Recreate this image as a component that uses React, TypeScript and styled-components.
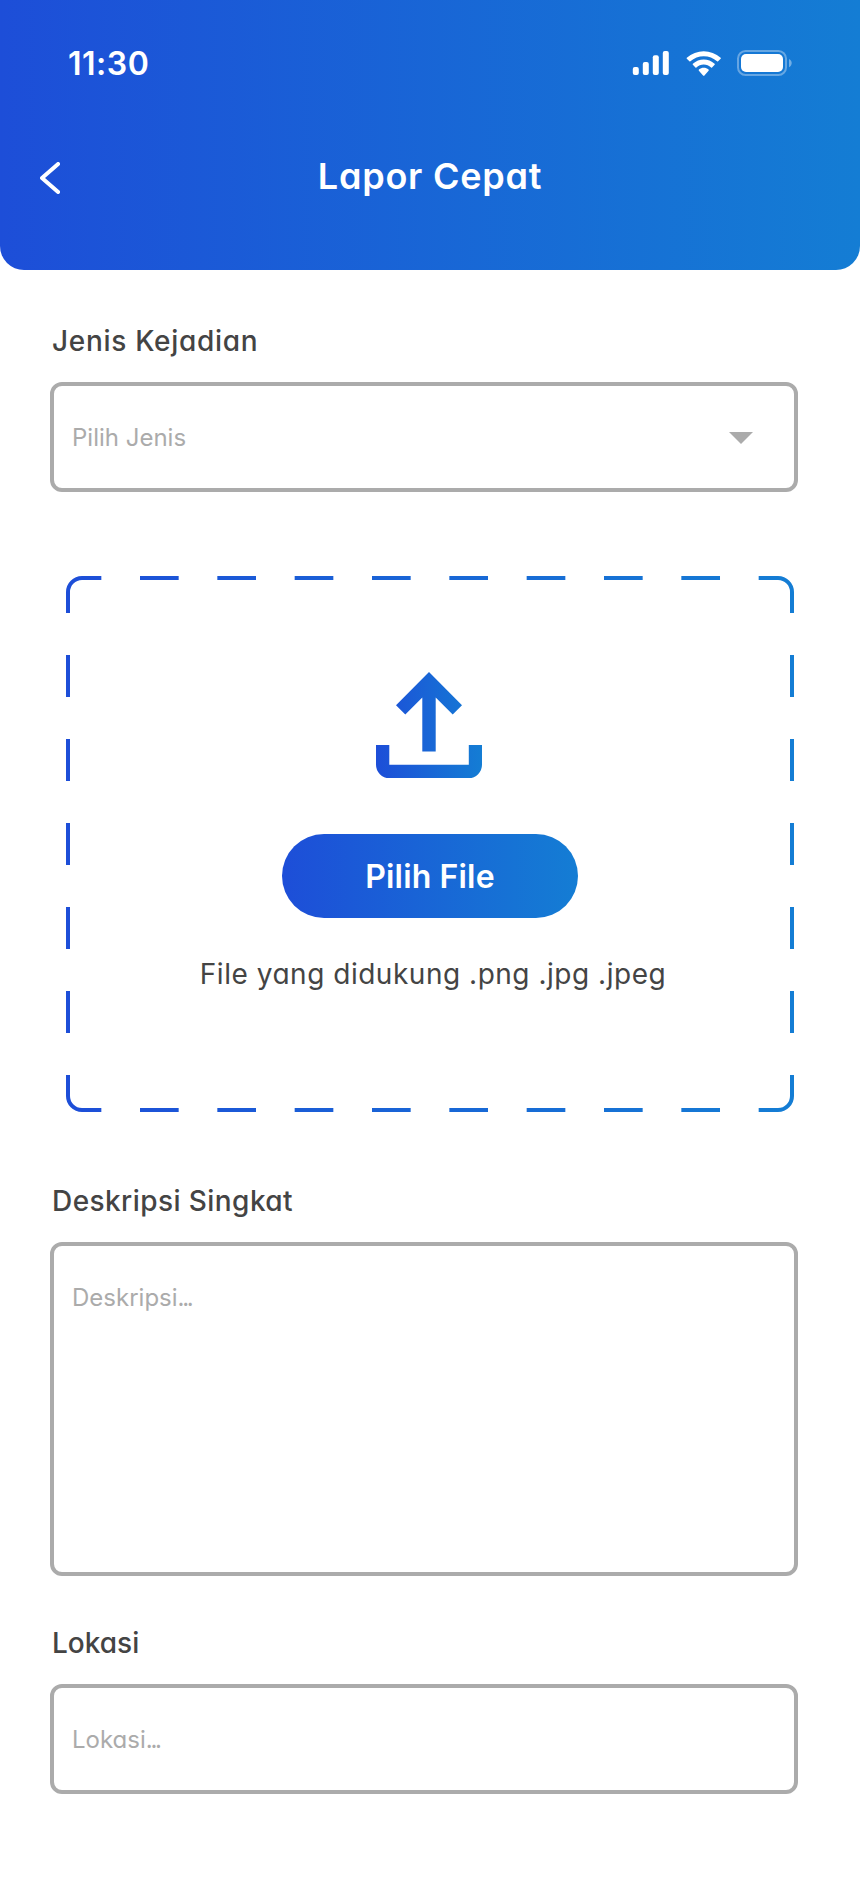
import React from "react";
import styled, { createGlobalStyle } from "styled-components";

const BLUE = "#1d4ed8";
const SKY = "#147dd4";
const GRAY = "#ababab";
const INK = "#444444";

const GlobalStyle = createGlobalStyle`
  *, *::before, *::after { box-sizing: border-box; }
  body {
    margin: 0;
    background: #fff;
    font-family: Inter, sans-serif;
    font-feature-settings: "cv11";
  }
`;

const Screen = styled.main`
  width: 860px;
  height: 1878px;
  background: #fff;
  overflow: hidden;
`;

const Header = styled.header`
  height: 270px;
  border-radius: 0 0 24px 24px;
  background: linear-gradient(90deg, ${BLUE}, ${SKY});
  color: #fff;
`;

const StatusBar = styled.div`
  display: flex;
  align-items: flex-start;
  justify-content: space-between;
  height: 140px;
  padding: 44px 67px 0 68px;
`;

const Clock = styled.time`
  font-size: 32px;
  font-weight: 600;
  line-height: 40px;
  letter-spacing: 0.5px;
`;

const StatusIcons = styled.div`
  display: flex;
  align-items: flex-start;
  gap: 16px;
  padding-top: 6px;
`;

const TitleBar = styled.div`
  display: grid;
  grid-template-columns: 60px 1fr 60px;
  align-items: center;
  height: 72px;
  padding: 0 20px;
`;

const BackButton = styled.button`
  display: flex;
  width: 60px;
  height: 60px;
  padding: 16px 20px 0;
  border: 0;
  background: none;
  color: inherit;
`;

const Title = styled.h1`
  margin: 0;
  padding: 0 0 1px;
  font-size: 36px;
  font-weight: 600;
  line-height: 48px;
  letter-spacing: 0.75px;
  text-align: center;
`;

const Form = styled.form`
  display: flex;
  flex-direction: column;
  padding: 50px 62px 0 50px;
`;

const Field = styled.div<{ $gap: number }>`
  display: flex;
  flex-direction: column;
  gap: 21px;
  margin-bottom: ${(p) => p.$gap}px;
`;

const Label = styled.label<{ $track: number }>`
  padding: 1px 0 0 2px;
  color: ${INK};
  font-size: 28px;
  font-weight: 500;
  line-height: 40px;
  letter-spacing: ${(p) => p.$track}px;
`;

const Box = styled.div<{ $height: number }>`
  display: flex;
  align-items: flex-start;
  justify-content: space-between;
  height: ${(p) => p.$height}px;
  padding: 32px 41px 0 18px;
  border: 4px solid ${GRAY};
  border-radius: 12px;
`;

const Placeholder = styled.span`
  color: ${GRAY};
  font-size: 24px;
  font-weight: 400;
  line-height: 40px;
`;

const Dots = styled.span`
  letter-spacing: -2.3px;
`;

const Caret = styled.svg`
  margin-top: 14px;
`;

const DropZone = styled.section`
  display: grid;
  width: 728px;
  height: 536px;
  margin: 0 0 68px 16px;
`;

const DashedFrame = styled.svg`
  grid-area: 1 / 1;
`;

const DropContent = styled.div`
  grid-area: 1 / 1;
  display: flex;
  flex-direction: column;
  align-items: center;
  padding-top: 96px;
`;

const UploadIcon = styled.svg`
  margin-right: 2px;
`;

const PickButton = styled.button`
  width: 296px;
  height: 84px;
  margin-top: 56px;
  padding: 1px 0 0;
  border: 0;
  border-radius: 42px;
  background: linear-gradient(90deg, ${BLUE}, ${SKY});
  color: #fff;
  font-family: inherit;
  font-feature-settings: inherit;
  font-size: 32px;
  font-weight: 600;
  letter-spacing: 0.15px;
`;

const Hint = styled.p`
  margin: 36px 0 0 6px;
  color: ${INK};
  font-size: 28px;
  line-height: 40px;
  letter-spacing: 0.52px;
  white-space: nowrap;
`;

const Signal = () => (
  <svg width="38" height="26" viewBox="0 0 38 26" fill="#fff">
    <rect x="0.8" y="17" width="6" height="8" rx="2" />
    <rect x="10.8" y="12" width="6" height="13" rx="2" />
    <rect x="20.8" y="5.2" width="6" height="19.8" rx="2" />
    <rect x="30.8" y="1" width="6" height="24" rx="2" />
  </svg>
);

const Wifi = () => (
  <svg width="35" height="26" viewBox="-0.3 -0.6 17.5 13" fill="#fff">
    <path d="M8.5713 2.46628C11.0584 2.46639 13.4504 3.38847 15.2529 5.04195C15.3887 5.16963 15.6056 5.16802 15.7393 5.03834L17.0368 3.77487C17.1045 3.70911 17.1422 3.62004 17.1417 3.52735C17.1411 3.43467 17.1023 3.34603 17.0338 3.28104C12.3028 -1.09368 4.83907 -1.09368 0.108056 3.28104C0.0395 3.34598 0.0006 3.4346 0 3.52728C-0.0006 3.61996 0.037 3.70906 0.10469 3.77487L1.40255 5.03834C1.53615 5.16822 1.75327 5.16983 1.88893 5.04195C3.69167 3.38836 6.08395 2.46628 8.5713 2.46628ZM8.56795 6.68656C9.92527 6.68647 11.2341 7.19821 12.2403 8.12234C12.3763 8.2535 12.5907 8.25065 12.7234 8.11594L14.0106 6.79654C14.0784 6.72739 14.116 6.63352 14.115 6.53598C14.1141 6.43844 14.0747 6.34538 14.0056 6.27763C10.9416 3.38503 6.19688 3.38503 3.13305 6.27763C3.06384 6.34538 3.02435 6.43848 3.02345 6.53607C3.02254 6.63365 3.0603 6.72752 3.12822 6.79654L4.41513 8.11594C4.54778 8.25065 4.76215 8.2535 4.89823 8.12234C5.90368 7.19882 7.21152 6.68713 8.56795 6.68656ZM11.0924 9.48011C11.0943 9.58546 11.0572 9.68703 10.9899 9.76084L8.81327 12.2156C8.74946 12.2877 8.66247 12.3283 8.5717 12.3283C8.48093 12.3283 8.39394 12.2877 8.33013 12.2156L6.15314 9.76084C6.08583 9.68697 6.0488 9.58537 6.05077 9.48002C6.05275 9.37467 6.09356 9.27483 6.16357 9.20404C7.55397 7.89157 9.58943 7.89157 10.9798 9.20404C11.0498 9.27488 11.0905 9.37476 11.0924 9.48011Z" />
  </svg>
);

const Battery = () => (
  <svg width="56" height="26" viewBox="0 0 56 26">
    <rect x="1" y="1" width="48" height="24" rx="7.6" fill="none" stroke="#fff" strokeOpacity="0.35" strokeWidth="2" />
    <path d="M52 9v8.2c1.7-.7 2.7-2.3 2.7-4.1S53.7 9.7 52 9Z" fill="#fff" fillOpacity="0.4" />
    <rect x="4" y="4" width="42" height="18" rx="5" fill="#fff" />
  </svg>
);

const Frame = () => (
  <DashedFrame width="728" height="536" viewBox="0 0 728 536" fill="none">
    <defs>
      <linearGradient id="frame" gradientUnits="userSpaceOnUse" x1="0" y1="0" x2="728" y2="0">
        <stop stopColor={BLUE} />
        <stop offset="1" stopColor={SKY} />
      </linearGradient>
    </defs>
    <g stroke="url(#frame)" strokeWidth="4">
      <path d="M2 16A14 14 0 0 1 16 2M712 2A14 14 0 0 1 726 16M726 520A14 14 0 0 1 712 534M16 534A14 14 0 0 1 2 520" />
      <path d="M16 2H712M16 534H712" strokeDasharray="38.667" strokeDashoffset="19.333" />
      <path d="M2 16V520M726 16V520" strokeDasharray="42" strokeDashoffset="21" />
    </g>
  </DashedFrame>
);

const Upload = () => (
  <UploadIcon width="106" height="106" viewBox="0 0 106 106">
    <defs>
      <linearGradient id="upload" gradientUnits="userSpaceOnUse" x1="0" y1="0" x2="106" y2="0">
        <stop stopColor={BLUE} />
        <stop offset="1" stopColor={SKY} />
      </linearGradient>
    </defs>
    <path
      fill="url(#upload)"
      d="M53 0 86 33.2 76.7 42.5 59.7 25.5V79.5H46.3V25.5L29.3 42.5 20 33.2ZM0 73H13.3V92.8H92.8V73H106V92.8A13.2 13.2 0 0 1 92.8 106H13.2A13.2 13.2 0 0 1 0 92.8Z"
    />
  </UploadIcon>
);

export default function App() {
  return (
    <Screen>
      <GlobalStyle />
      <Header>
        <StatusBar>
          <Clock>11:30</Clock>
          <StatusIcons>
            <Signal />
            <Wifi />
            <Battery />
          </StatusIcons>
        </StatusBar>
        <TitleBar>
          <BackButton type="button" aria-label="Kembali">
            <svg width="20" height="32" viewBox="0 0 20 32" fill="none" stroke="#fff" strokeWidth="4" strokeLinecap="round" strokeLinejoin="round">
              <path d="M18.1 2 2 16 18.1 30" />
            </svg>
          </BackButton>
          <Title>Lapor Cepat</Title>
        </TitleBar>
      </Header>
      <Form>
        <Field $gap={84}>
          <Label $track={0.7}>Jenis Kejadian</Label>
          <Box $height={110}>
            <Placeholder>Pilih Jenis</Placeholder>
            <Caret width="24" height="12" viewBox="0 0 24 12" fill={GRAY}>
              <path d="M0 0H24L12 12Z" />
            </Caret>
          </Box>
        </Field>
        <DropZone>
          <Frame />
          <DropContent>
            <Upload />
            <PickButton type="button">Pilih File</PickButton>
            <Hint>File yang didukung .png .jpg .jpeg</Hint>
          </DropContent>
        </DropZone>
        <Field $gap={46}>
          <Label $track={0.43}>Deskripsi Singkat</Label>
          <Box $height={334}>
            <Placeholder>Deskripsi<Dots>...</Dots></Placeholder>
          </Box>
        </Field>
        <Field $gap={0}>
          <Label $track={0}>Lokasi</Label>
          <Box $height={110}>
            <Placeholder>Lokasi<Dots>...</Dots></Placeholder>
          </Box>
        </Field>
      </Form>
    </Screen>
  );
}
